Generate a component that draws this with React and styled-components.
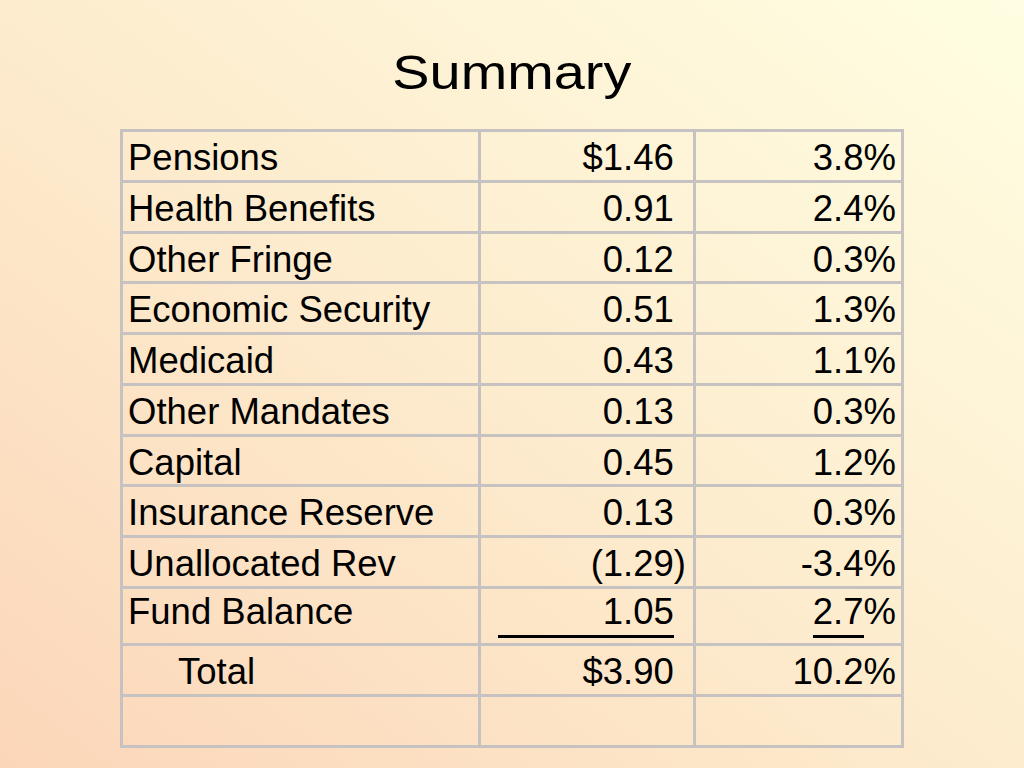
import React from 'react';
import styled, { createGlobalStyle } from 'styled-components';

const GlobalStyle = createGlobalStyle`
  html, body {
    margin: 0;
    padding: 0;
  }
  body {
    font-family: 'Liberation Sans', Arial, sans-serif;
    color: #000;
  }
`;

const Slide = styled.div`
  width: 1024px;
  height: 768px;
  box-sizing: border-box;
  padding-top: 45px;
  display: flex;
  flex-direction: column;
  align-items: center;
  background: linear-gradient(to top right, #fcd6b9 0%, #fdecce 50%, #fffee2 100%);
`;

const Title = styled.h1`
  margin: 0;
  font-size: 49px;
  font-weight: normal;
  line-height: 54px;
  transform: scaleX(1.14);
`;

const Table = styled.div`
  margin-top: 30px;
  width: 784px;
  box-sizing: border-box;
  display: grid;
  grid-template-columns: 358px 215px 208px;
  grid-template-rows: repeat(9, 50.78px) 57px 51px 51px;
  border-top: 3px solid #c6c2c2;
  border-left: 3px solid #c6c2c2;
`;

const Cell = styled.div`
  box-sizing: border-box;
  border-right: 3px solid #c6c2c2;
  border-bottom: 3px solid #c6c2c2;
  font-size: 36.5px;
  line-height: 41px;
  white-space: nowrap;
  text-align: ${(p) => (p.$label ? 'left' : 'right')};
  padding-top: ${(p) => (p.$tight ? 2 : 5)}px;
  padding-left: ${(p) => (p.$indent ? 55 : 5)}px;
  padding-right: ${(p) => (p.$pct ? 5 : 7)}px;
`;

// keeps positive amounts lined up with the "(1.29)" closing paren
const Paren = styled.span`
  visibility: hidden;
`;

const Underline = styled.span`
  display: inline-block;
  min-width: ${(p) => p.$w || 0}px;
  text-align: right;
  line-height: 36px;
  padding-bottom: 5px;
  border-bottom: 3px solid #000;
`;

const rows = [
  ['Pensions', '$1.46', '3.8%'],
  ['Health Benefits', '0.91', '2.4%'],
  ['Other Fringe', '0.12', '0.3%'],
  ['Economic Security', '0.51', '1.3%'],
  ['Medicaid', '0.43', '1.1%'],
  ['Other Mandates', '0.13', '0.3%'],
  ['Capital', '0.45', '1.2%'],
  ['Insurance Reserve', '0.13', '0.3%'],
  ['Unallocated Rev', '(1.29)', '-3.4%'],
];

const Amount = ({ value }) =>
  value.endsWith(')') ? (
    value
  ) : (
    <>
      {value}
      <Paren>)</Paren>
    </>
  );

const App = () => {
  return (
    <>
      <GlobalStyle />
      <Slide>
        <Title>Summary</Title>
        <Table>
          {rows.map(([label, amount, pct]) => (
            <React.Fragment key={label}>
              <Cell $label>{label}</Cell>
              <Cell>
                <Amount value={amount} />
              </Cell>
              <Cell $pct>{pct}</Cell>
            </React.Fragment>
          ))}

          <Cell $label $tight>
            Fund Balance
          </Cell>
          <Cell $tight>
            <Underline $w={176}>1.05</Underline>
            <Paren>)</Paren>
          </Cell>
          <Cell $pct $tight>
            <Underline>2.7</Underline>%
          </Cell>

          <Cell $label $indent>
            Total
          </Cell>
          <Cell>
            <Amount value="$3.90" />
          </Cell>
          <Cell $pct>10.2%</Cell>

          <Cell $label />
          <Cell />
          <Cell $pct />
        </Table>
      </Slide>
    </>
  );
};

export default App;
